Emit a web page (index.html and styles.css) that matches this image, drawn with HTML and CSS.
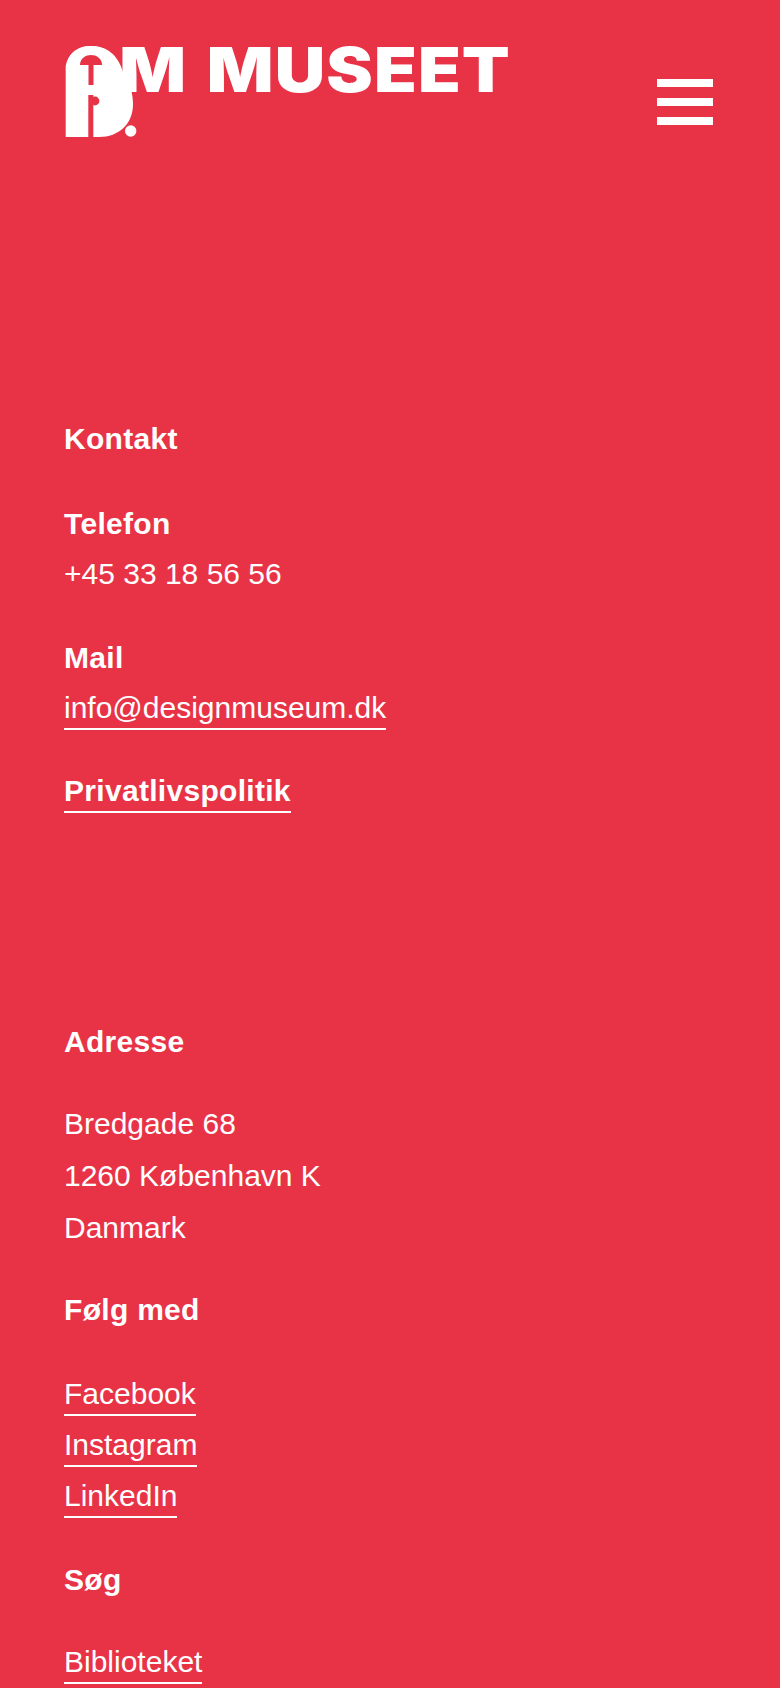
FILE: index.html
```html
<!DOCTYPE html>
<html lang="da">

<head>
    <meta charset="UTF-8">
    <title>Om museet</title>
    <link rel="stylesheet" href="styles.css">
</head>

<body>
    <header class="site-header">
        <h1 class="page-title">OM MUSEET</h1>
        <button class="menu-btn" aria-label="Menu">
            <span></span>
            <span></span>
            <span></span>
        </button>
        <svg class="logo" width="74" height="92" viewBox="0 0 74 92" aria-label="Designmuseum Danmark">
            <path class="logo-white" d="M0.7 91 V20 C3 8 12 0 26 0 C42 0 53 9 58 26 C65 36 68 48 68 58 C68 78 54 91 34 91 Z" />
            <path class="logo-red" d="M15 19 C15 12 21 9 26 9 C31 9 37 12 37 19 Z" />
            <rect class="logo-red" x="23.5" y="19" width="5" height="20" />
            <rect class="logo-red" x="23.3" y="49" width="5" height="42" />
            <circle class="logo-red" cx="30" cy="55" r="4.4" />
            <circle class="logo-white" cx="65.7" cy="85" r="5.7" />
        </svg>
    </header>

    <main class="content">
        <section class="block block-contact">
            <h2 class="label">Kontakt</h2>
            <h3 class="label label-gap">Telefon</h3>
            <p class="value">+45 33 18 56 56</p>
            <h3 class="label label-gap">Mail</h3>
            <p class="value"><a href="#">info@designmuseum.dk</a></p>
            <p class="label label-link"><a href="#">Privatlivspolitik</a></p>
        </section>

        <section class="block block-address">
            <h2 class="label">Adresse</h2>
            <address class="address">
                Bredgade 68<br>
                1260 København K<br>
                Danmark
            </address>
        </section>

        <section class="block block-follow">
            <h2 class="label">Følg med</h2>
            <ul class="links">
                <li><a href="#">Facebook</a></li>
                <li><a href="#">Instagram</a></li>
                <li><a href="#">LinkedIn</a></li>
            </ul>
        </section>

        <section class="block block-search">
            <h2 class="label">Søg</h2>
            <ul class="links">
                <li><a href="#">Biblioteket</a></li>
            </ul>
        </section>
    </main>
</body>

</html>
```
FILE: styles.css
```css
* {
    margin: 0;
    padding: 0;
    box-sizing: border-box;
}

html,
body {
    height: 1688px;
    overflow: hidden;
}

body {
    background: #e83347;
    color: #fff;
    font-family: "Liberation Sans", Arial, sans-serif;
    font-size: 30px;
}

li {
    list-style: none;
}

a {
    color: #fff;
    text-decoration: none;
    display: inline-block;
    line-height: 40px;
    border-bottom: 2px solid #fff;
}

.site-header {
    position: relative;
    display: flex;
    justify-content: space-between;
    padding: 34px 67px 0 64px;
    height: 414px;
}

.page-title {
    font-family: Inter, sans-serif;
    font-size: 62px;
    font-weight: 900;
    line-height: 72px;
    letter-spacing: 1px;
    word-spacing: 4px;
    transform: scaleX(1.127);
    transform-origin: left center;
}

.menu-btn {
    display: flex;
    flex-direction: column;
    gap: 11px;
    width: 56px;
    margin-top: 45px;
    background: none;
    border: 0;
}

.menu-btn span {
    display: block;
    height: 8px;
    background: #fff;
}

.logo {
    position: absolute;
    left: 65px;
    top: 46px;
}

.logo-white {
    fill: #fff;
}

.logo-red {
    fill: #e83347;
}

.content {
    padding-left: 64px;
}

.label {
    font-size: 30px;
    font-weight: 700;
    line-height: 50px;
    letter-spacing: 0.3px;
}

.label-gap {
    margin-top: 35px;
}

.label-link {
    margin-top: 34px;
}

.value {
    font-weight: 400;
    line-height: 49px;
}

.address {
    font-style: normal;
    font-weight: 400;
    line-height: 52px;
    margin-top: 31px;
}

.links {
    margin-top: 39px;
    font-weight: 400;
}

.links li {
    height: 51px;
}

.block-address {
    margin-top: 201px;
}

.block-follow {
    margin-top: 31px;
}

.block-search {
    margin-top: 28px;
}

.block-search .links {
    margin-top: 37px;
}
```
